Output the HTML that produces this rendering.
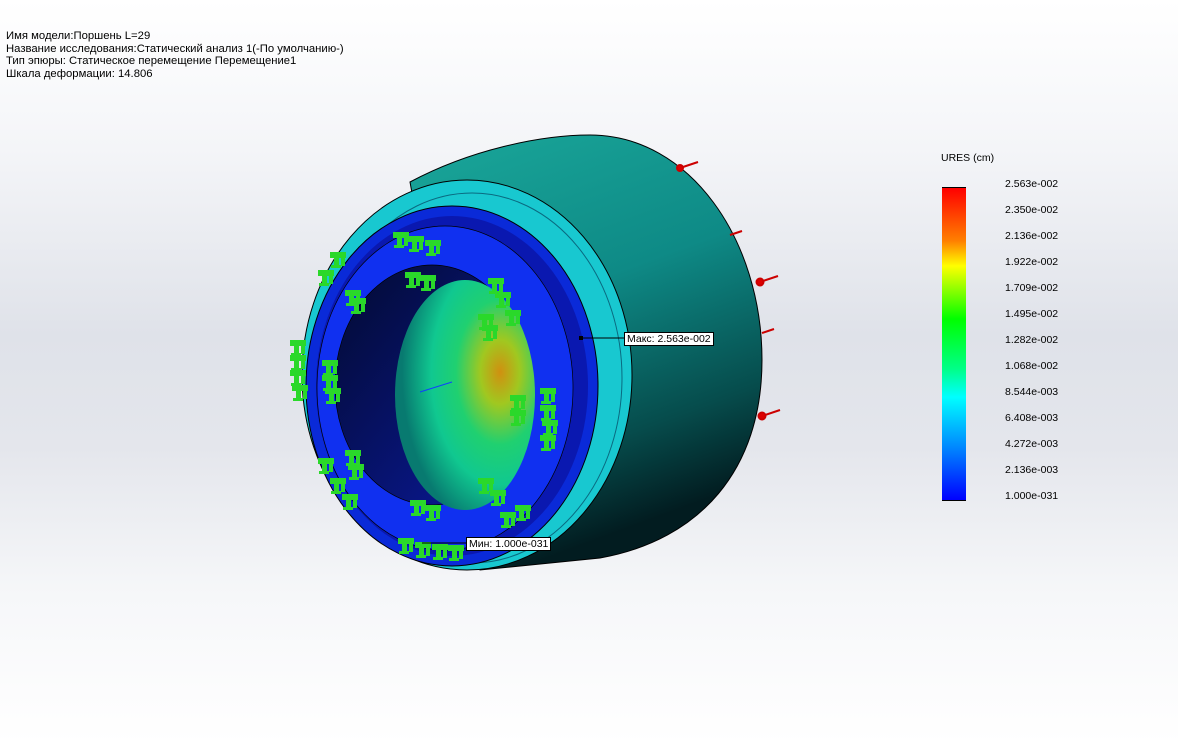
<!DOCTYPE html>
<html><head><meta charset="utf-8"><style>
html,body{margin:0;padding:0}
body{width:1178px;height:744px;overflow:hidden;position:relative;font-family:"Liberation Sans",sans-serif;
background:linear-gradient(180deg,#fff 0%,#f4f5f8 20%,#dfe2e9 45%,#e4e6ec 60%,#f6f7f9 80%,#fff 100%);}
.hdr{position:absolute;left:6px;top:30px;font-size:11.3px;line-height:12.5px;color:#000}
.lg{position:absolute;left:1005px;font-size:10.5px;color:#000}
</style></head><body>
<div class="hdr">Имя модели:Поршень L=29<br>Название исследования:Статический анализ 1(-По умолчанию-)<br>Тип эпюры: Статическое перемещение Перемещение1<br>Шкала деформации: 14.806</div>
<div style="position:absolute;left:941px;top:152px;font-size:10.5px">URES (cm)</div>
<div style="position:absolute;left:942px;top:187px;width:24px;height:312px;background:linear-gradient(180deg,#f00 0%,#ff8000 17%,#ff0 25%,#0f0 42%,#0f8 58%,#0ff 67%,#08f 83%,#00f 100%);border-top:1px solid #000;border-bottom:1px solid #000"></div>
<div class="lg" style="top:178px">2.563e-002</div>
<div class="lg" style="top:204px">2.350e-002</div>
<div class="lg" style="top:230px">2.136e-002</div>
<div class="lg" style="top:256px">1.922e-002</div>
<div class="lg" style="top:282px">1.709e-002</div>
<div class="lg" style="top:308px">1.495e-002</div>
<div class="lg" style="top:334px">1.282e-002</div>
<div class="lg" style="top:360px">1.068e-002</div>
<div class="lg" style="top:386px">8.544e-003</div>
<div class="lg" style="top:412px">6.408e-003</div>
<div class="lg" style="top:438px">4.272e-003</div>
<div class="lg" style="top:464px">2.136e-003</div>
<div class="lg" style="top:490px">1.000e-031</div>
<svg width="1178" height="744" style="position:absolute;left:0;top:0">
<defs>
<linearGradient id="drum" x1="0" y1="0" x2="0.3" y2="1">
<stop offset="0" stop-color="#1aa79a"/><stop offset="0.45" stop-color="#0e8a86"/><stop offset="0.8" stop-color="#064c4c"/><stop offset="1" stop-color="#021c20"/></linearGradient>
<radialGradient id="inner" cx="0.75" cy="0.4" r="0.7">
<stop offset="0" stop-color="#d09010"/><stop offset="0.2" stop-color="#a0c820"/><stop offset="0.45" stop-color="#20d070"/><stop offset="0.7" stop-color="#10c890"/><stop offset="1" stop-color="#087a70"/></radialGradient>
<linearGradient id="hole" x1="0" y1="0" x2="1" y2="1"><stop offset="0" stop-color="#030a30"/><stop offset="1" stop-color="#0a1aa0"/></linearGradient>
<g id="cl" fill="#2ad82a"><rect x="0" y="0" width="16" height="6"/><rect x="4" y="3" width="5" height="13"/><rect x="11" y="3" width="4" height="11"/><rect x="1" y="13" width="10" height="3"/></g>
</defs>
<path d="M410 182 C470 150 540 135 590 135 C690 135 762 240 762 360 C762 470 700 540 600 558 L480 570 Z" fill="url(#drum)" stroke="#000" stroke-width="1"/>
<ellipse cx="467" cy="375" rx="165" ry="195" fill="#18c8d0" stroke="#000"/>
<ellipse cx="472" cy="378" rx="150" ry="185" fill="none" stroke="#0a6a80" stroke-width="1"/>
<ellipse cx="452" cy="386" rx="146" ry="180" fill="#0a2ad8" stroke="#000"/>
<ellipse cx="452" cy="386" rx="136" ry="170" fill="#0a18b0"/>
<ellipse cx="445" cy="388" rx="128" ry="162" fill="#1030f0" stroke="#000" stroke-width="0.7"/>
<ellipse cx="432" cy="385" rx="97" ry="120" fill="url(#hole)" stroke="#000" stroke-width="0.7"/>
<ellipse cx="465" cy="395" rx="70" ry="115" fill="url(#inner)"/>
<line x1="420" y1="392" x2="452" y2="382" stroke="#1040ff" stroke-width="1"/>
<g>
<use href="#cl" x="393" y="232"/><use href="#cl" x="408" y="236"/><use href="#cl" x="425" y="240"/>
<use href="#cl" x="330" y="252"/><use href="#cl" x="318" y="270"/><use href="#cl" x="345" y="290"/><use href="#cl" x="350" y="298"/>
<use href="#cl" x="405" y="272"/><use href="#cl" x="420" y="275"/>
<use href="#cl" x="488" y="278"/><use href="#cl" x="495" y="292"/><use href="#cl" x="505" y="310"/><use href="#cl" x="478" y="314"/><use href="#cl" x="482" y="325"/>
<use href="#cl" x="290" y="340"/><use href="#cl" x="290" y="355"/><use href="#cl" x="290" y="370"/><use href="#cl" x="292" y="385"/>
<use href="#cl" x="322" y="360"/><use href="#cl" x="322" y="375"/><use href="#cl" x="325" y="388"/>
<use href="#cl" x="510" y="395"/><use href="#cl" x="510" y="410"/><use href="#cl" x="540" y="388"/><use href="#cl" x="540" y="405"/><use href="#cl" x="542" y="420"/><use href="#cl" x="540" y="435"/>
<use href="#cl" x="318" y="458"/><use href="#cl" x="345" y="450"/><use href="#cl" x="348" y="464"/><use href="#cl" x="330" y="478"/><use href="#cl" x="342" y="494"/>
<use href="#cl" x="410" y="500"/><use href="#cl" x="425" y="505"/><use href="#cl" x="478" y="478"/><use href="#cl" x="490" y="490"/>
<use href="#cl" x="500" y="512"/><use href="#cl" x="515" y="505"/><use href="#cl" x="398" y="538"/><use href="#cl" x="415" y="542"/><use href="#cl" x="432" y="544"/><use href="#cl" x="448" y="545"/>
</g>
<g stroke="#c00" stroke-width="2" fill="#d00">
<line x1="680" y1="168" x2="698" y2="162"/><circle cx="680" cy="168" r="3"/>
<line x1="730" y1="235" x2="742" y2="231"/>
<line x1="760" y1="282" x2="778" y2="276"/><circle cx="760" cy="282" r="3.5"/>
<line x1="762" y1="333" x2="774" y2="329"/>
<line x1="762" y1="416" x2="780" y2="410"/><circle cx="762" cy="416" r="3.5"/>
</g>
<line x1="581" y1="338" x2="625" y2="338" stroke="#000"/><rect x="579" y="336" width="4" height="4"/>
<line x1="422" y1="543" x2="466" y2="543" stroke="#000"/>
</svg>
<div style="position:absolute;left:624px;top:332px;background:#fff;border:1px solid #000;font-size:10.5px;padding:0 2px;line-height:12px">Макс: 2.563e-002</div>
<div style="position:absolute;left:466px;top:537px;background:#fff;border:1px solid #000;font-size:10.5px;padding:0 2px;line-height:12px">Мин: 1.000e-031</div>
</body></html>
